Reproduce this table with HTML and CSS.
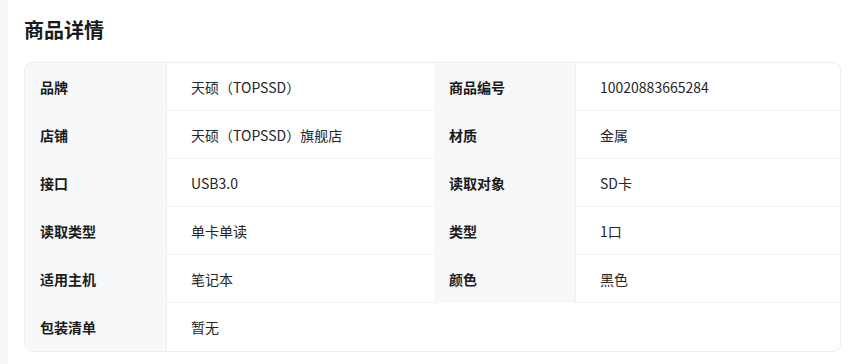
FILE: index.html
```html
<!DOCTYPE html>
<html lang="zh">
<head>
<meta charset="utf-8">
<link rel="stylesheet" href="styles.css">
</head>
<body>
<div class="panel">
  <h2 class="title">商品详情</h2>
  <div class="table">
    <div class="row">
      <div class="label">品牌</div><div class="value">天硕（TOPSSD）</div>
      <div class="label">商品编号</div><div class="value">10020883665284</div>
    </div>
    <div class="row">
      <div class="label">店铺</div><div class="value">天硕（TOPSSD）旗舰店</div>
      <div class="label">材质</div><div class="value">金属</div>
    </div>
    <div class="row">
      <div class="label">接口</div><div class="value">USB3.0</div>
      <div class="label">读取对象</div><div class="value">SD卡</div>
    </div>
    <div class="row">
      <div class="label">读取类型</div><div class="value">单卡单读</div>
      <div class="label">类型</div><div class="value">1口</div>
    </div>
    <div class="row">
      <div class="label">适用主机</div><div class="value">笔记本</div>
      <div class="label">颜色</div><div class="value">黑色</div>
    </div>
    <div class="row last">
      <div class="label">包装清单</div><div class="value wide">暂无</div>
    </div>
  </div>
</div>
</body>
</html>
```
FILE: styles.css
```css
html, body {
  margin: 0;
  padding: 0;
}
body {
  background: #f5f6f9;
  font-family: "Noto Sans CJK SC", "Noto Sans", sans-serif;
  color: #1f1f1f;
  height: 364px;
  overflow: hidden;
}
.panel {
  background: #ffffff;
  margin-left: 8px;
  padding: 0 10px 0 16px;
  height: 364px;
}
.title {
  margin: 0;
  padding-top: 14px;
  height: 62px;
  box-sizing: border-box;
  font-size: 20px;
  line-height: 32px;
  font-weight: 700;
  color: #1a1a1a;
}
.table {
  border: 1px solid #ebedf0;
  border-radius: 8px;
  overflow: hidden;
  width: 817px;
  box-sizing: border-box;
}
.row {
  display: grid;
  grid-template-columns: 142px 267px 142px 1fr;
  height: 48px;
}
.row.last {
  grid-template-columns: 142px 1fr;
}
.label {
  background: #f7f8fa;
  font-size: 14px;
  font-weight: 700;
  padding-left: 15px;
  display: flex;
  align-items: center;
  border-right: 1px solid #eff0f2;
  color: #1a1a1a;
}
.value {
  font-size: 14px;
  padding-left: 24px;
  display: flex;
  align-items: center;
  border-bottom: 1px solid #eff0f2;
  color: #262626;
}
.row.last .value {
  border-bottom: none;
}
```
